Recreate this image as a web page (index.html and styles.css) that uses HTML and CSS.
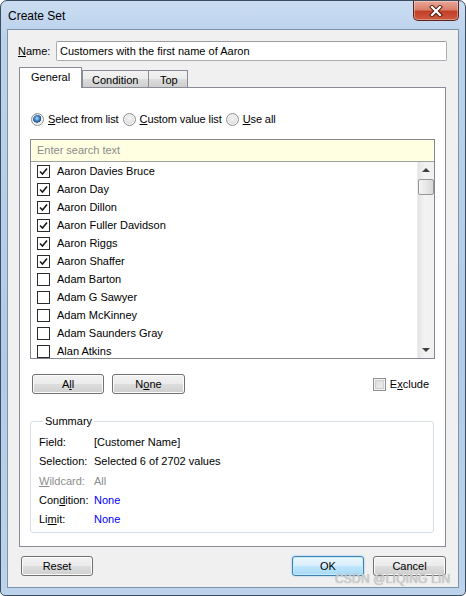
FILE: index.html
```html
<!DOCTYPE html>
<html>
<head>
<meta charset="utf-8">
<link rel="stylesheet" href="styles.css">
</head>
<body>
<div class="window">
  <div class="titlebar">
    <span class="title">Create Set</span>
    <div class="close">
      <svg width="16" height="12" viewBox="0 0 16 12"><path d="M4 2 L12 10 M12 2 L4 10" stroke="#4a1a12" stroke-width="4" stroke-linecap="square"/><path d="M4 2 L12 10 M12 2 L4 10" stroke="#fff" stroke-width="2.2" stroke-linecap="square"/></svg>
    </div>
  </div>
  <div class="client">
    <div class="name-row">
      <span class="name-label"><u>N</u>ame:</span>
      <div class="text-input">Customers with the first name of Aaron</div>
    </div>
    <div class="tabs">
      <div class="tab active">General</div>
      <div class="tab">Condition</div>
      <div class="tab">Top</div>
    </div>
    <div class="panel">
      <div class="radios">
        <span class="radio checked"></span><span class="radio-label"><u>S</u>elect from list</span>
        <span class="radio"></span><span class="radio-label"><u>C</u>ustom value list</span>
        <span class="radio"></span><span class="radio-label"><u>U</u>se all</span>
      </div>
      <div class="listbox">
        <div class="search">Enter search text</div>
        <div class="list-body">
          <div class="items">
            <div class="item"><span class="cb on"><svg width="11" height="11" viewBox="0 0 11 11"><path d="M2 5.5 L4.5 8 L9 2.5" fill="none" stroke="#1a1a1a" stroke-width="1.6"/></svg></span>Aaron Davies Bruce</div>
            <div class="item"><span class="cb on"><svg width="11" height="11" viewBox="0 0 11 11"><path d="M2 5.5 L4.5 8 L9 2.5" fill="none" stroke="#1a1a1a" stroke-width="1.6"/></svg></span>Aaron Day</div>
            <div class="item"><span class="cb on"><svg width="11" height="11" viewBox="0 0 11 11"><path d="M2 5.5 L4.5 8 L9 2.5" fill="none" stroke="#1a1a1a" stroke-width="1.6"/></svg></span>Aaron Dillon</div>
            <div class="item"><span class="cb on"><svg width="11" height="11" viewBox="0 0 11 11"><path d="M2 5.5 L4.5 8 L9 2.5" fill="none" stroke="#1a1a1a" stroke-width="1.6"/></svg></span>Aaron Fuller Davidson</div>
            <div class="item"><span class="cb on"><svg width="11" height="11" viewBox="0 0 11 11"><path d="M2 5.5 L4.5 8 L9 2.5" fill="none" stroke="#1a1a1a" stroke-width="1.6"/></svg></span>Aaron Riggs</div>
            <div class="item"><span class="cb on"><svg width="11" height="11" viewBox="0 0 11 11"><path d="M2 5.5 L4.5 8 L9 2.5" fill="none" stroke="#1a1a1a" stroke-width="1.6"/></svg></span>Aaron Shaffer</div>
            <div class="item"><span class="cb"></span>Adam Barton</div>
            <div class="item"><span class="cb"></span>Adam G Sawyer</div>
            <div class="item"><span class="cb"></span>Adam McKinney</div>
            <div class="item"><span class="cb"></span>Adam Saunders Gray</div>
            <div class="item"><span class="cb"></span>Alan Atkins</div>
          </div>
          <div class="scrollbar">
            <div class="arrow up"></div>
            <div class="thumb"></div>
            <div class="track"></div>
            <div class="arrow down"></div>
          </div>
        </div>
      </div>
      <div class="list-actions">
        <div class="btn w72">A<u>l</u>l</div>
        <div class="btn w73">N<u>o</u>ne</div>
        <div class="spacer"></div>
        <span class="cb3d"></span><span class="exclude">E<u>x</u>clude</span>
      </div>
      <fieldset class="summary">
        <legend>Summary</legend>
        <div class="srow"><span class="skey">Field:</span><span>[Customer Name]</span></div>
        <div class="srow"><span class="skey">Selection:</span><span>Selected 6 of 2702 values</span></div>
        <div class="srow muted"><span class="skey"><u>W</u>ildcard:</span><span>All</span></div>
        <div class="srow"><span class="skey">Con<u>d</u>ition:</span><span class="link">None</span></div>
        <div class="srow"><span class="skey">Li<u>m</u>it:</span><span class="link">None</span></div>
      </fieldset>
    </div>
    <div class="footer">
      <div class="btn w72">Reset</div>
      <div class="spacer"></div>
      <div class="btn w72 default">OK</div>
      <div class="btn w73">Cancel</div>
    </div>
  </div>
  <div class="watermark">CSDN @LIQING LIN</div>
</div>
</body>
</html>
```
FILE: styles.css
```css
* { box-sizing: border-box; }
html, body { margin: 0; padding: 0; background: #fff; }
body { font-family: "Liberation Sans", Arial, sans-serif; font-size: 11px; color: #000; }
u { text-decoration: underline; text-underline-offset: 1px; }

.window {
  position: relative;
  width: 466px;
  height: 596px;
  border: 1px solid #3d4d60;
  border-radius: 7px 7px 5px 5px;
  background: linear-gradient(180deg, #c9dcf1 0%, #bcd2ec 6%, #b3cbe8 60%, #bdd3ec 100%);
  padding: 0 6px 7px 6px;
  display: flex;
  flex-direction: column;
  overflow: hidden;
}

.titlebar {
  height: 28px;
  display: flex;
  justify-content: space-between;
  align-items: flex-start;
}
.title {
  font-size: 12px;
  padding: 8px 0 0 1px;
  color: #000;
}
.close {
  width: 46px;
  height: 20px;
  border: 1px solid #5e2218;
  border-top: none;
  border-radius: 0 0 5px 5px;
  background: linear-gradient(180deg, #e8a597 0%, #d9806c 45%, #c43f27 55%, #cc5a3f 100%);
  box-shadow: inset 0 0 0 1px rgba(255,255,255,0.35);
  display: flex;
  align-items: center;
  justify-content: center;
}

.client {
  flex: 1;
  border: 1px solid #7d94ad;
  background: #f0f0f0;
  display: flex;
  flex-direction: column;
}

.name-row {
  display: flex;
  align-items: center;
  margin-top: 11px;
  padding: 0 11px 0 10px;
  height: 20px;
}
.name-label { width: 38px; }
.text-input {
  flex: 1;
  height: 20px;
  border: 1px solid #abadb3;
  border-top-color: #9c9c9c;
  border-radius: 2px;
  background: #fff;
  padding: 3px 0 0 3px;
}

.tabs {
  display: flex;
  align-items: flex-end;
  margin: 6px 0 0 11px;
  height: 20px;
  position: relative;
  z-index: 1;
}
.tab {
  height: 17px;
  border: 1px solid #898c95;
  border-bottom: none;
  background: linear-gradient(180deg, #f2f2f2 0%, #ebebeb 50%, #dddddd 51%, #cfcfcf 100%);
  padding: 3px 10px 0 10px;
  margin-left: -1px;
}
.tab:nth-child(2) { width: 67px; padding-left: 9px; }
.tab:nth-child(3) { width: 40px; padding-left: 11px; }
.tab.active {
  width: 63px;
  height: 21px;
  margin-left: 0;
  margin-bottom: -1px;
  background: #fff;
  padding: 3px 0 0 11px;
  margin-right: 1px;
}

.panel {
  flex: 1;
  margin: 0 12px 0 11px;
  border: 1px solid #898c95;
  background: #fff;
  display: flex;
  flex-direction: column;
}

.radios {
  display: flex;
  align-items: center;
  height: 16px;
  margin-top: 23px;
  padding-left: 11px;
}
.radio {
  width: 13px;
  height: 13px;
  border-radius: 50%;
  border: 1px solid #8e8f8f;
  background: radial-gradient(circle at 50% 40%, #f4f4f4 0%, #dcdcdc 70%, #cfcfcf 100%);
  box-shadow: inset 0 0 0 1px #f6f6f6;
  flex: none;
}
.radio.checked {
  background: radial-gradient(circle at 45% 40%, #b9dbf6 0%, #3d84c6 28%, #1c4f86 45%, #e9e9e9 50%, #dadada 100%);
}
.radio-label { margin: 0 4px 0 4px; letter-spacing: -0.1px; }

.listbox {
  margin: 12px 10px 0 10px;
  border: 1px solid #828790;
}
.search {
  height: 22px;
  background: #ffffe1;
  border-bottom: 1px solid #a0a0a0;
  color: #8a8a8a;
  padding: 4px 0 0 6px;
}
.list-body {
  height: 196px;
  display: flex;
  overflow: hidden;
}
.items { flex: 1; overflow: hidden; }
.item {
  height: 18px;
  display: flex;
  align-items: center;
  padding-left: 6px;
}
.cb {
  width: 13px;
  height: 13px;
  border: 1px solid #2b2b2b;
  background: #fff;
  margin-right: 7px;
  flex: none;
  display: flex;
  align-items: center;
  justify-content: center;
}

.scrollbar {
  width: 17px;
  display: flex;
  flex-direction: column;
  background: linear-gradient(90deg, #e4e4e4 0%, #f3f3f3 40%, #f0f0f0 100%);
  border-left: 1px solid #ececec;
}
.arrow { height: 17px; position: relative; flex: none; }
.arrow::after {
  content: "";
  position: absolute;
  left: 4px;
  border-left: 4px solid transparent;
  border-right: 4px solid transparent;
}
.arrow.up::after { top: 6px; border-bottom: 4px solid #3f3f3f; }
.arrow.down::after { top: 7px; border-top: 4px solid #3f3f3f; }
.thumb {
  height: 16px;
  border: 1px solid #979797;
  border-radius: 2px;
  background: linear-gradient(90deg, #f4f4f4 0%, #e8e8e8 50%, #d7d7d7 100%);
  flex: none;
}
.track { flex: 1; }

.list-actions {
  display: flex;
  align-items: center;
  margin: 15px 16px 0 12px;
  height: 20px;
}
.spacer { flex: 1; }
.btn {
  height: 20px;
  border: 1px solid #707070;
  border-radius: 3px;
  background: linear-gradient(180deg, #f2f2f2 0%, #ebebeb 50%, #dddddd 51%, #cfcfcf 100%);
  box-shadow: inset 0 0 0 1px #fcfcfc;
  display: flex;
  align-items: center;
  justify-content: center;
  flex: none;
}
.w72 { width: 72px; }
.w73 { width: 73px; }
.list-actions .btn + .btn { margin-left: 8px; }
.cb3d {
  width: 13px;
  height: 13px;
  border: 1px solid #8e8f8f;
  background: linear-gradient(135deg, #d9d9d9 0%, #f2f2f2 100%);
  box-shadow: inset 0 0 0 1px #f4f4f4, inset 0 0 0 2px #cfcfcf;
  margin-right: 4px;
}

.summary {
  margin: 20px 11px 0 10px;
  padding: 5px 4px 3px 8px;
  border: 1px solid #d5dfe5;
  border-radius: 3px;
  min-width: 0;
}
.summary legend {
  padding: 0 2px;
  margin-left: 4px;
  line-height: 14px;
}
.srow { display: flex; line-height: 19.3px; }
.skey { width: 55px; }
.muted { color: #8d8d8d; }
.link { color: #0000ff; }

.footer {
  display: flex;
  margin-top: 9px;
  padding: 0 12px 11px 13px;
  height: 31px;
  align-items: flex-start;
}
.footer .btn + .btn { margin-left: 9px; }
.btn.default {
  border-color: #3c7fb1;
  box-shadow: inset 0 0 0 1px #c8ecfb, 0 0 2px #7cc3ee;
  background: linear-gradient(180deg, #eaf6fd 0%, #d9effc 50%, #bee6fd 51%, #a7d9f5 100%);
}

.watermark {
  position: absolute;
  left: 334px;
  top: 571px;
  font-size: 12px;
  color: #d0d0d0;
  text-shadow: 0 0 1px #999;
  letter-spacing: 0.2px;
}
```
